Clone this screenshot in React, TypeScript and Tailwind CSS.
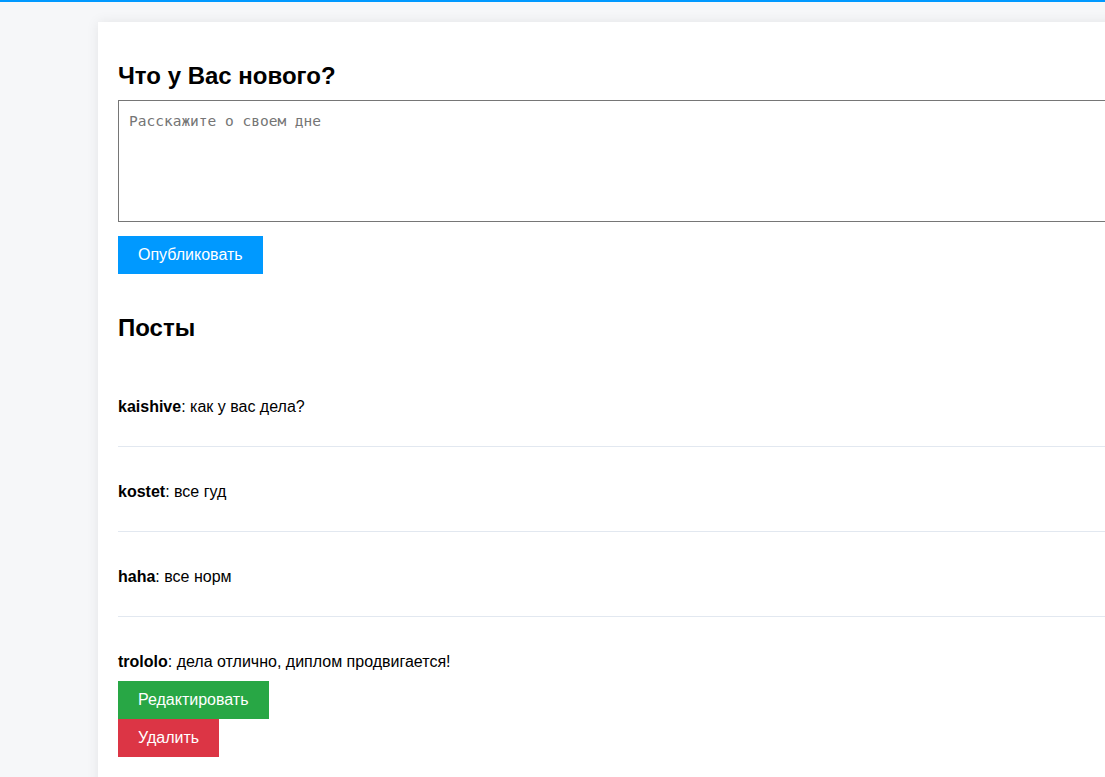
import { useState } from "react";

type Post = {
  id: number;
  author: string;
  text: string;
  own?: boolean;
};

const posts: Post[] = [
  { id: 1, author: "kaishive", text: "как у вас дела?" },
  { id: 2, author: "kostet", text: "все гуд" },
  { id: 3, author: "haha", text: "все норм" },
  { id: 4, author: "trololo", text: "дела отлично, диплом продвигается!", own: true },
];

export default function App() {
  const [draft, setDraft] = useState("");

  return (
    <div className="h-screen w-full overflow-hidden bg-[#f6f7f9] font-['Liberation_Sans',Arial,sans-serif] text-black">
      <div className="h-[2px] w-full bg-[#0099ff]" />
      <div className="flex pt-5 pl-[98px]">
        <main className="w-[1100px] shrink-0 min-h-[800px] bg-white px-5 pt-10 shadow-[0_0_12px_rgba(0,0,0,0.08)]">
          <h2 className="mb-[10px] text-[24px] leading-[28px] font-bold">Что у Вас нового?</h2>
          <textarea
            value={draft}
            onChange={(e) => setDraft(e.target.value)}
            placeholder="Расскажите о своем дне"
            className="block h-[122px] w-full resize-none border border-[#767676] px-[10px] py-[10px] font-['DejaVu_Sans_Mono',monospace] text-[14.5px] leading-[20px] placeholder:text-[#757575] outline-none"
          />
          <button className="mt-[14px] block h-[38px] bg-[#0099ff] px-5 text-[16px] text-white">
            Опубликовать
          </button>

          <h2 className="mt-10 mb-5 text-[24px] leading-[28px] font-bold">Посты</h2>

          <div>
            {posts.map((post) => (
              <div
                key={post.id}
                className={post.own ? "pt-[36px]" : "border-b border-[#e2e8f0] pt-[36px] pb-[30px]"}
              >
                <p className="text-[16px] leading-[18px]">
                  <span className="font-bold">{post.author}</span>: {post.text}
                </p>
                {post.own && (
                  <div className="mt-[10px]">
                    <button className="block h-[38px] bg-[#28a745] px-5 text-[16px] text-white">
                      Редактировать
                    </button>
                    <button className="block h-[38px] bg-[#dc3545] px-5 text-[16px] text-white">
                      Удалить
                    </button>
                  </div>
                )}
              </div>
            ))}
          </div>
        </main>
      </div>
    </div>
  );
}
